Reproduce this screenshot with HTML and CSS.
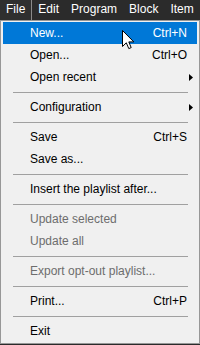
FILE: index.html
```html
<!DOCTYPE html>
<html>
<head>
<meta charset="utf-8">
<link rel="stylesheet" href="styles.css">
</head>
<body>
<div class="bar">
  <div class="bar-item open">File</div>
  <div class="bar-item">Edit</div>
  <div class="bar-item">Program</div>
  <div class="bar-item">Block</div>
  <div class="bar-item">Item</div>
</div>
<div class="menu">
  <div class="item hot"><span class="label">New...</span><span class="key">Ctrl+N</span></div>
  <div class="item"><span class="label">Open...</span><span class="key">Ctrl+O</span></div>
  <div class="item"><span class="label">Open recent</span><svg class="sub" width="4" height="7" viewBox="0 0 4 7"><path d="M0 0L4 3.5L0 7Z" fill="#000"/></svg></div>
  <div class="sep"></div>
  <div class="item"><span class="label">Configuration</span><svg class="sub" width="4" height="7" viewBox="0 0 4 7"><path d="M0 0L4 3.5L0 7Z" fill="#000"/></svg></div>
  <div class="sep"></div>
  <div class="item"><span class="label">Save</span><span class="key">Ctrl+S</span></div>
  <div class="item"><span class="label">Save as...</span></div>
  <div class="sep"></div>
  <div class="item"><span class="label">Insert the playlist after...</span></div>
  <div class="sep"></div>
  <div class="item off"><span class="label">Update selected</span></div>
  <div class="item off"><span class="label">Update all</span></div>
  <div class="sep"></div>
  <div class="item off"><span class="label">Export opt-out playlist...</span></div>
  <div class="sep"></div>
  <div class="item"><span class="label">Print...</span><span class="key">Ctrl+P</span></div>
  <div class="sep"></div>
  <div class="item"><span class="label">Exit</span></div>
</div>
<svg class="cursor" width="13" height="20" viewBox="0 0 13 20"><path d="M0.5 0.5L0.5 16.5L4.3 12.8L6.8 18.6L9.2 17.6L6.8 11.9L11.8 11.9Z" fill="#fff" stroke="#000" stroke-width="1" stroke-linejoin="miter"/></svg>
</body>
</html>
```
FILE: styles.css
```css
html, body {
  margin: 0;
  padding: 0;
  background: #2b2b2b;
  width: 200px;
  height: 345px;
  overflow: hidden;
  font-family: "Liberation Sans", Arial, sans-serif;
  font-size: 12px;
  position: relative;
}
.bar {
  display: flex;
  height: 20px;
  background: #2b2b2b;
  color: #fff;
}
.bar-item {
  padding: 0 6px;
  line-height: 19px;
  height: 20px;
  box-sizing: border-box;
  white-space: nowrap;
}
.bar-item.open {
  border-right: 1px solid #8a8a8a;
  background: #2f2f2f;
}
.menu {
  width: 200px;
  box-sizing: border-box;
  border: 1px solid #979797;
  background: #f0f0f0;
  padding: 1px 2px;
  display: flex;
  flex-direction: column;
}
.item {
  height: 22px;
  line-height: 22px;
  display: flex;
  align-items: center;
  padding: 0 10px 0 27px;
  color: #000;
  white-space: nowrap;
}
.item .label {
  flex: 1;
}
.item .key {
  margin-right: 0;
}
.item .sub {
  margin-right: -6px;
}
.item.hot {
  background: #0078d7;
  color: #fff;
}
.item.off {
  color: #6d6d6d;
}
.sep {
  height: 8px;
  display: flex;
  align-items: center;
  padding: 0 9px 0 10px;
}
.sep::before {
  content: "";
  flex: 1;
  height: 1px;
  background: #a0a0a0;
}
.cursor {
  position: absolute;
  left: 122px;
  top: 30px;
}
```
